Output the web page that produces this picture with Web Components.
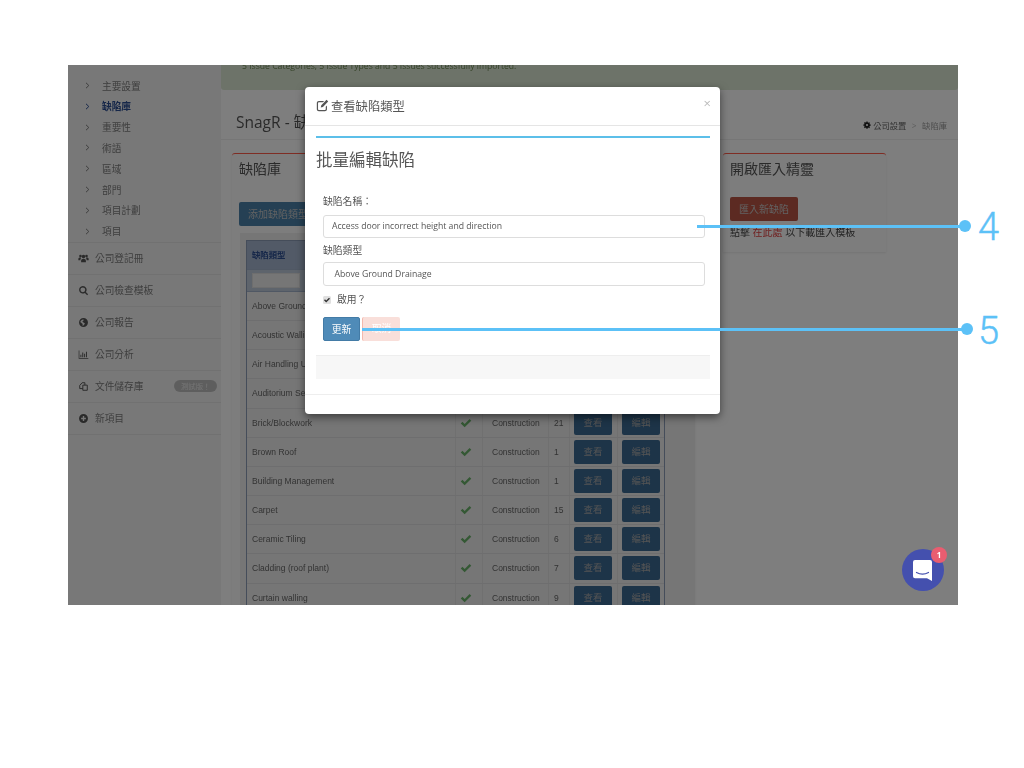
<!DOCTYPE html>
<html lang="zh-Hant">
<head>
<meta charset="utf-8">
<title>SnagR</title>
<style>
  html, body { margin: 0; background: #fff; }
  body {
    width: 1024px;
    height: 768px;
    overflow: hidden;
    position: relative;
    font-family: "Open Sans", "Noto Sans CJK TC", sans-serif;
  }
</style>
</head>
<body>
<snag-screen>
  <snag-sidebar slot="side">
    <side-sub>主要設置</side-sub>
    <side-sub active>缺陷庫</side-sub>
    <side-sub>重要性</side-sub>
    <side-sub>術語</side-sub>
    <side-sub>區域</side-sub>
    <side-sub>部門</side-sub>
    <side-sub>項目計劃</side-sub>
    <side-sub>項目</side-sub>
    <side-item icon="users" first>公司登記冊</side-item>
    <side-item icon="search">公司檢查模板</side-item>
    <side-item icon="globe">公司報告</side-item>
    <side-item icon="chart">公司分析</side-item>
    <side-item icon="files" badge="測試版！">文件儲存庫</side-item>
    <side-item icon="plus">新項目</side-item>
  </snag-sidebar>

  <snag-content slot="main">
    <snag-panel class="left" heading="缺陷庫">
      <snag-button color="blue" style="margin-top:10px">添加缺陷類型</snag-button>
      <defect-table></defect-table>
    </snag-panel>
    <snag-panel class="right" heading="開啟匯入精靈">
      <snag-button color="red" style="margin-top:5px">匯入新缺陷</snag-button>
      <import-note></import-note>
    </snag-panel>
  </snag-content>

  <edit-modal slot="over"></edit-modal>
  <chat-bubble slot="over" count="1"></chat-bubble>
</snag-screen>

<snag-callout number="4" from="697" to="964.5" y="226" dy="1"></snag-callout>
<snag-callout number="5" from="362" to="966.5" y="329" dy="2"></snag-callout>

<script>
const icons = {
  users: '<circle cx="8" cy="5.2" r="2.6"/><circle cx="3.6" cy="4.4" r="1.9"/><circle cx="12.4" cy="4.4" r="1.9"/><path d="M4.500 13.500v-2c0-2 1.500-3.200 3.500-3.200s3.500 1.200 3.500 3.200v2z"/><path d="M.5 10.500V8.800c0-1.400 1-2.200 2.500-2.200.8 0 1.200.2 1.600.5-.6.7-1.100 1.500-1.100 2.600v.8z"/><path d="M15.500 10.500V8.800c0-1.400-1-2.200-2.500-2.200-.8 0-1.200.2-1.600.5.600.7 1.100 1.500 1.100 2.600v.8z"/>',
  search: '<path fill-rule="evenodd" d="M7 1.500a5.500 5.500 0 0 1 4.400 8.800l3.300 3.300-1.400 1.400-3.300-3.300A5.500 5.500 0 1 1 7 1.500zm0 2a3.500 3.500 0 1 0 0 7 3.500 3.500 0 0 0 0-7z"/>',
  globe: '<path d="M8 1.500a6.500 6.500 0 1 1 0 13 6.500 6.500 0 0 1 0-13zm-1 2.200C5 4.200 3.500 5.700 3.400 7.800c.9.200 1.300.8 1.900 1.300.6.400 1.300.5 1.500 1.300l-.3 1.900c.6.500 1.500.3 1.900-.5l1.300-1.500c.4-.5.2-1.300-.5-1.500L7.300 7.500 6.400 6l1.300-.5.800-1.600z"/>',
  chart: '<path d="M1 2h1v11h13v1H1zM3.500 8.500h1.400V12H3.500zM6.200 5h1.400v7H6.200zM8.900 7h1.400v5H8.900zM11.600 4h1.400v8h-1.400z"/>',
  files: '<path fill="none" stroke="currentColor" stroke-width="1.4" d="M10 6V2.500H6L2.500 6.500V11H7M7 6h6.500v7.500H7z"/>',
  plus: '<path fill-rule="evenodd" d="M8 1.500a6.500 6.500 0 1 1 0 13 6.500 6.500 0 0 1 0-13zM7 4.500V7H4.500v2H7v2.500h2V9h2.500V7H9V4.500z"/>',
  gear: '<path fill-rule="evenodd" d="M6.800 1h2.400l.4 2 1 .4 1.700-1.100 1.700 1.700-1.100 1.700.4 1 2 .4v2.400l-2 .4-.4 1 1.100 1.700-1.700 1.700-1.700-1.100-1 .4-.4 2H6.800l-.4-2-1-.4-1.700 1.100L2 12.400l1.100-1.700-.4-1-2-.4V6.900l2-.4.4-1L2 3.800 3.700 2.100l1.700 1.100 1-.4zM8 5.800a2.200 2.200 0 1 0 0 4.400 2.200 2.200 0 0 0 0-4.400z"/>',
  edit: '<path fill-rule="evenodd" d="M3.500 2.500H10L8.500 4H3.500C2.900 4 2.500 4.400 2.500 5v7.500c0 .6.400 1 1 1H11c.6 0 1-.4 1-1V9.500L13.500 8v4.500c0 1.400-1.100 2.500-2.500 2.500H3.500C2.100 15 1 13.900 1 12.500V5c0-1.400 1.100-2.500 2.500-2.500zM13 1l2 2-6.500 6.800-2.700.7.700-2.700z"/>'
};
const svg = (name, size) =>
  `<svg viewBox="0 0 16 16" width="${size}" height="${size}" fill="currentColor" aria-hidden="true">${icons[name]}</svg>`;

// builds a class with a fixed shadow template, nothing else
function simple(tag, html) {
  const tpl = document.createElement("template");
  tpl.innerHTML = html;
  customElements.define(tag, class extends HTMLElement {
    constructor() {
      super();
      this.attachShadow({ mode: "open" }).appendChild(tpl.content.cloneNode(true));
    }
  });
}

simple("snag-screen", `
  <style>
    :host {
      display: block;
      position: absolute;
      left: 68px;
      top: 65px;
      width: 890px;
      height: 540px;
      overflow: hidden;
      filter: blur(.35px);
    }
    #app { display: flex; height: 100%; background: #fcfcfc; }
    #back { position: absolute; inset: 0; background: rgba(0, 0, 0, .5); }
  </style>
  <div id="app">
    <slot name="side"></slot>
    <slot name="main"></slot>
  </div>
  <div id="back"></div>
  <slot name="over"></slot>
`);

simple("snag-sidebar", `
  <style>
    :host {
      display: block;
      flex: none;
      width: 153px;
      box-sizing: border-box;
      padding-top: 10.2px;
      background: #f0f0f0;
      color: #777;
    }
  </style>
  <slot></slot>
`);

class SideSub extends HTMLElement {
  connectedCallback() {
    const root = this.attachShadow({ mode: "open" });
    root.innerHTML = `
      <style>
        :host {
          display: flex;
          align-items: center;
          height: 20.8px;
          padding-left: 17px;
          font-size: 9.7px;
          color: #7c7c7c;
        }
        :host([active]) { color: #2c4e92; font-weight: 700; }
        svg { width: 5px; height: 7px; margin-right: 12px; }
      </style>
      <svg viewBox="0 0 5 7" fill="none" stroke="currentColor" stroke-width="1"><path d="M1 .8 3.800 3.500 1 6.200"/></svg>
      <slot></slot>`;
  }
}
customElements.define("side-sub", SideSub);

class SideItem extends HTMLElement {
  connectedCallback() {
    const root = this.attachShadow({ mode: "open" });
    const badge = this.getAttribute("badge");
    root.innerHTML = `
      <style>
        :host {
          display: flex;
          align-items: center;
          box-sizing: border-box;
          height: 32px;
          padding: 0 4px 0 10px;
          border-bottom: 1px solid #e2e2e2;
          font-size: 9.7px;
          color: #7c7c7c;
        }
        :host([first]) { border-top: 1px solid #e2e2e2; height: 33px; }
        .ic { display: flex; width: 17px; color: #555; }
        .ic svg { width: 11px; height: 11px; }
        .badge {
          margin-left: auto;
          height: 12px;
          line-height: 12px;
          padding: 0 6.5px;
          border-radius: 6px;
          background: #bdbdbd;
          color: #e8e8e8;
          font-size: 7.4px;
        }
      </style>
      <span class="ic">${svg(this.getAttribute("icon"), 11)}</span>
      <slot></slot>
      ${badge ? `<span class="badge">${badge}</span>` : ""}`;
  }
}
customElements.define("side-item", SideItem);

simple("snag-content", `
  <style>
    :host { display: block; flex: 1; min-width: 0; }
    .alert {
      height: 25px;
      box-sizing: border-box;
      padding: 0 21px;
      background: #dbe6d3;
      border-radius: 0 0 3px 3px;
      color: #6d8a55;
      font-size: 8.65px;
      line-height: 3px;
    }
    .head {
      display: flex;
      justify-content: space-between;
      align-items: center;
      height: 50px;
      box-sizing: border-box;
      padding: 14px 11px 0 15px;
      border-bottom: 1px solid #ececec;
    }
    h1 { margin: 0; font-size: 15.5px; font-weight: 400; color: #555; }
    .crumbs { display: flex; align-items: center; margin-top: 7px; font-size: 8.3px; color: #666; }
    .crumbs svg { margin-right: 2px; color: #222; }
    .crumbs i { font-style: normal; margin: 0 5.5px; color: #bbb; }
    .crumbs span:last-child { color: #999; }
    .cols { display: flex; align-items: flex-start; padding: 13px 0 0 11px; }
    ::slotted(.left) { width: 463px; }
    ::slotted(.right) { width: 163px; margin-left: 28px; }
  </style>
  <div class="alert">5 Issue Categories, 5 Issue Types and 5 Issues successfully imported.</div>
  <div class="head">
    <h1>SnagR - 缺陷庫</h1>
    <div class="crumbs">${svg("gear", 8)}<span>公司設置</span><i>&gt;</i><span>缺陷庫</span></div>
  </div>
  <div class="cols"><slot></slot></div>
`);

class SnagPanel extends HTMLElement {
  connectedCallback() {
    const root = this.attachShadow({ mode: "open" });
    root.innerHTML = `
      <style>
        :host {
          display: block;
          box-sizing: border-box;
          padding: 0 7px 12px;
          background: #fafafa;
          border-top: 1.5px solid #ff5a48;
          border-radius: 3px 3px 0 0;
          box-shadow: 0 1px 2px rgba(0, 0, 0, .08);
        }
        h2 { margin: 0; height: 37.5px; line-height: 29.5px; font-size: 14px; font-weight: 400; color: #555; }
      </style>
      <h2>${this.getAttribute("heading")}</h2>
      <slot></slot>`;
  }
}
customElements.define("snag-panel", SnagPanel);

class SnagButton extends HTMLElement {
  connectedCallback() {
    const root = this.attachShadow({ mode: "open" });
    root.innerHTML = `
      <style>
        :host {
          display: block;
          width: fit-content;
          height: 24px;
          line-height: 24px;
          padding: 0 9px;
          border-radius: 2px;
          color: #c4c4c4;
          font-size: 10px;
        }
        :host([color=blue]) { background: #4a80a8; }
        :host([color=red]) { background: #b85545; }
      </style>
      <slot></slot>`;
  }
}
customElements.define("snag-button", SnagButton);

simple("import-note", `
  <style>
    :host { display: block; margin-top: 3px; font-size: 10px; line-height: 16px; color: #444; }
    b { font-weight: 400; color: #e04040; }
  </style>
  點擊 <b>在此處</b> 以下載匯入模板
`);

// rows under the dialog only show their name, so the rest of those cells stay empty
const ROWS = [
  ["Above Ground Drainage"], ["Acoustic Walling"], ["Air Handling Units"], ["Auditorium Seating"],
  ["Brick/Blockwork", "21"], ["Brown Roof", "1"], ["Building Management", "1"], ["Carpet", "15"],
  ["Ceramic Tiling", "6"], ["Cladding (roof plant)", "7"], ["Curtain walling", "9"]
];
const CHECK = '<svg viewBox="0 0 16 16" width="12" height="12" fill="#68b068"><path d="M1 8.600 3.300 6.300 6.200 9.200 12.800 2.600 15 4.900 6.200 13.700z"/></svg>';

class DefectTable extends HTMLElement {
  connectedCallback() {
    const root = this.attachShadow({ mode: "open" });
    const rows = ROWS.map(([name, count]) => `
      <div class="row">
        <div>${name}</div>
        <div class="c k">${count ? CHECK : ""}</div>
        <div>${count ? "Construction" : ""}</div>
        <div>${count || ""}</div>
        <div class="c">${count ? '<span class="b">查看</span>' : ""}</div>
        <div class="c">${count ? '<span class="b">編輯</span>' : ""}</div>
      </div>`).join("");
    root.innerHTML = `
      <style>
        :host {
          display: block;
          margin: 7px -7px 0 1px;
          padding: 7px 30px 0 6px;
          background: #ededed;
          font-family: "Liberation Sans", "Noto Sans CJK TC", sans-serif;
          font-size: 8.5px;
          color: #666;
        }
        .table { border-left: 1px solid #8a9ab5; border-right: 1px solid #8a9ab5; }
        .title {
          height: 29px;
          box-sizing: border-box;
          padding-left: 5px;
          line-height: 28px;
          background: #a4b4ce;
          border-top: 1px solid #8a9ab5;
          color: #2c4e92;
          font-size: 8.4px;
          font-weight: 700;
        }
        .filter {
          height: 23.5px;
          box-sizing: border-box;
          padding: 3px 5px;
          background: #bcc8d8;
          border-top: 1px solid #a0b0c8;
          border-bottom: 1px solid #a0b0c8;
        }
        .filter span {
          display: block;
          width: 48px;
          height: 15px;
          box-sizing: border-box;
          background: #ececec;
          border: 1px solid #ddd;
        }
        .row {
          display: grid;
          grid-template-columns: 208px 27px 66px 21px 48px 48px;
          height: 29.17px;
          box-sizing: border-box;
          border-bottom: 1px solid #dcdcde;
          line-height: 28px;
        }
        .row > div { box-sizing: border-box; padding-left: 5px; border-left: 1px solid #e0e0e0; min-width: 0; white-space: nowrap; overflow: hidden; }
        .row > div:first-child { border-left: 0; }
        .row > div:nth-child(3) { padding-left: 9px; }
        .row > .c { display: flex; align-items: center; padding-left: 4px; }
        .b {
          display: block;
          width: 38px;
          height: 24px;
          line-height: 24px;
          text-align: center;
          border-radius: 2px;
          background: #3a6890;
          color: #a8a8a8;
          font-size: 9.5px;
        }
      </style>
      <div class="table">
        <div class="title">缺陷類型</div>
        <div class="filter"><span></span></div>
        ${rows}
      </div>`;
  }
}
customElements.define("defect-table", DefectTable);

simple("edit-modal", `
  <style>
    :host {
      display: block;
      position: absolute;
      left: 237px;
      top: 22px;
      width: 415px;
      height: 327px;
      background: #fff;
      border-radius: 4px;
      box-shadow: 0 3px 9px rgba(0, 0, 0, .5);
      color: #555;
    }
    header {
      display: flex;
      align-items: center;
      gap: 2px;
      height: 39px;
      box-sizing: border-box;
      padding: 0 11px 1px;
      border-bottom: 1px solid #e5e5e5;
      font-size: 12.3px;
    }
    header svg { flex: none; }
    .x { margin-left: auto; margin-right: -2px; margin-top: -6px; font-size: 13px; color: #bbb; }
    .body { padding: 10px 10px 0 11px; }
    .rule { height: 2px; background: #5cbfe9; }
    h3 { margin: 11px 0 0; font-size: 16.5px; line-height: 22px; font-weight: 400; }
    form { display: flex; flex-direction: column; align-items: flex-start; padding: 0 5px 0 7px; }
    label { font-size: 9.8px; line-height: 14px; }
    .first { margin-top: 23.5px; }
    .input {
      width: 382px;
      height: 23px;
      line-height: 21px;
      box-sizing: border-box;
      margin-top: 6.5px;
      padding-left: 8px;
      border: 1px solid #ddd;
      border-radius: 3px;
      font-size: 8.67px;
    }
    .second { margin-top: 5.5px; }
    .pick { height: 24px; line-height: 22px; margin-top: 4.5px; padding-left: 10.5px; }
    .check { display: flex; align-items: center; margin-top: 6.5px; height: 14px; gap: 6px; }
    .check span {
      width: 8px;
      height: 8px;
      background: #e0e0e0;
      border-radius: 1.5px;
      display: flex;
    }
    .actions { display: flex; gap: 2px; margin-top: 10.5px; }
    .save, .cancel { width: 37px; height: 24px; line-height: 23px; text-align: center; font-size: 9.8px; color: #fff; border-radius: 2px; box-sizing: border-box; }
    .save { background: #4f8bb8; border: 1px solid #437ba6; }
    .cancel { width: 38px; background: #f9dfda; border-left: 1px solid #f4b8ac; }
    .well { height: 23px; margin-top: 14px; background: #f7f7f7; border-top: 1px solid #eee; }
    .foot { height: 0; margin: 15px -10px 0 -11px; border-top: 1px solid #eee; }
  </style>
  <header>${svg("edit", 13)}<span>查看缺陷類型</span><span class="x">×</span></header>
  <div class="body">
    <div class="rule"></div>
    <h3>批量編輯缺陷</h3>
    <form>
      <label class="first">缺陷名稱：</label>
      <div class="input">Access door incorrect height and direction</div>
      <label class="second">缺陷類型</label>
      <div class="input pick">Above Ground Drainage</div>
      <div class="check">
        <span><svg viewBox="0 0 16 16" width="8" height="8" fill="#333"><path d="M2 8.600 4 6.600 6.400 9 12 3.400 14 5.400 6.400 13z"/></svg></span>
        <label>啟用？</label>
      </div>
      <div class="actions">
        <div class="save">更新</div>
        <div class="cancel">取消</div>
      </div>
    </form>
    <div class="well"></div>
    <div class="foot"></div>
  </div>
`);

class ChatBubble extends HTMLElement {
  connectedCallback() {
    const root = this.attachShadow({ mode: "open" });
    root.innerHTML = `
      <style>
        :host {
          display: flex;
          align-items: center;
          justify-content: center;
          position: absolute;
          left: 834px;
          top: 484px;
          width: 42px;
          height: 42px;
          border-radius: 50%;
          background: #4450ae;
        }
        .n {
          position: absolute;
          left: 29px;
          top: -2px;
          width: 16px;
          height: 16px;
          line-height: 16px;
          text-align: center;
          border-radius: 50%;
          background: #e95d70;
          color: #fff;
          font-size: 8px;
          font-weight: 700;
        }
      </style>
      <svg viewBox="0 0 20 21" width="20" height="21">
        <path fill="#fff" d="M2 0h15a2 2 0 0 1 2 2v19l-5-2.800H2a2 2 0 0 1-2-2V2a2 2 0 0 1 2-2z"/>
        <path fill="none" stroke="#4450ae" stroke-width="1.2" stroke-linecap="round" d="M3.500 12.500c3.500 2 8.500 2 12 0"/>
      </svg>
      <span class="n">${this.getAttribute("count")}</span>`;
  }
}
customElements.define("chat-bubble", ChatBubble);

// annotation drawn over the screenshot: line, dot and number
class SnagCallout extends HTMLElement {
  connectedCallback() {
    const from = +this.getAttribute("from");
    const to = +this.getAttribute("to");
    const y = +this.getAttribute("y");
    const dy = +this.getAttribute("dy");
    const root = this.attachShadow({ mode: "open" });
    root.innerHTML = `
      <style>
        :host {
          display: flex;
          align-items: center;
          position: absolute;
          left: ${from}px;
          top: ${y - 24}px;
          height: 48px;
          color: #5cc1f7;
        }
        .line { width: ${to - from}px; height: 3px; background: currentColor; }
        .dot { width: 12px; height: 12px; margin-left: -6px; border-radius: 50%; background: currentColor; }
        .num {
          margin: ${dy * 2}px 0 0 ${972 - to}px;
          font: 300 38px/48px Roboto, "Liberation Sans", sans-serif;
          -webkit-text-stroke: .4px currentColor;
        }
      </style>
      <div class="line"></div>
      <div class="dot"></div>
      <div class="num">${this.getAttribute("number")}</div>`;
  }
}
customElements.define("snag-callout", SnagCallout);
</script>
</body>
</html>
